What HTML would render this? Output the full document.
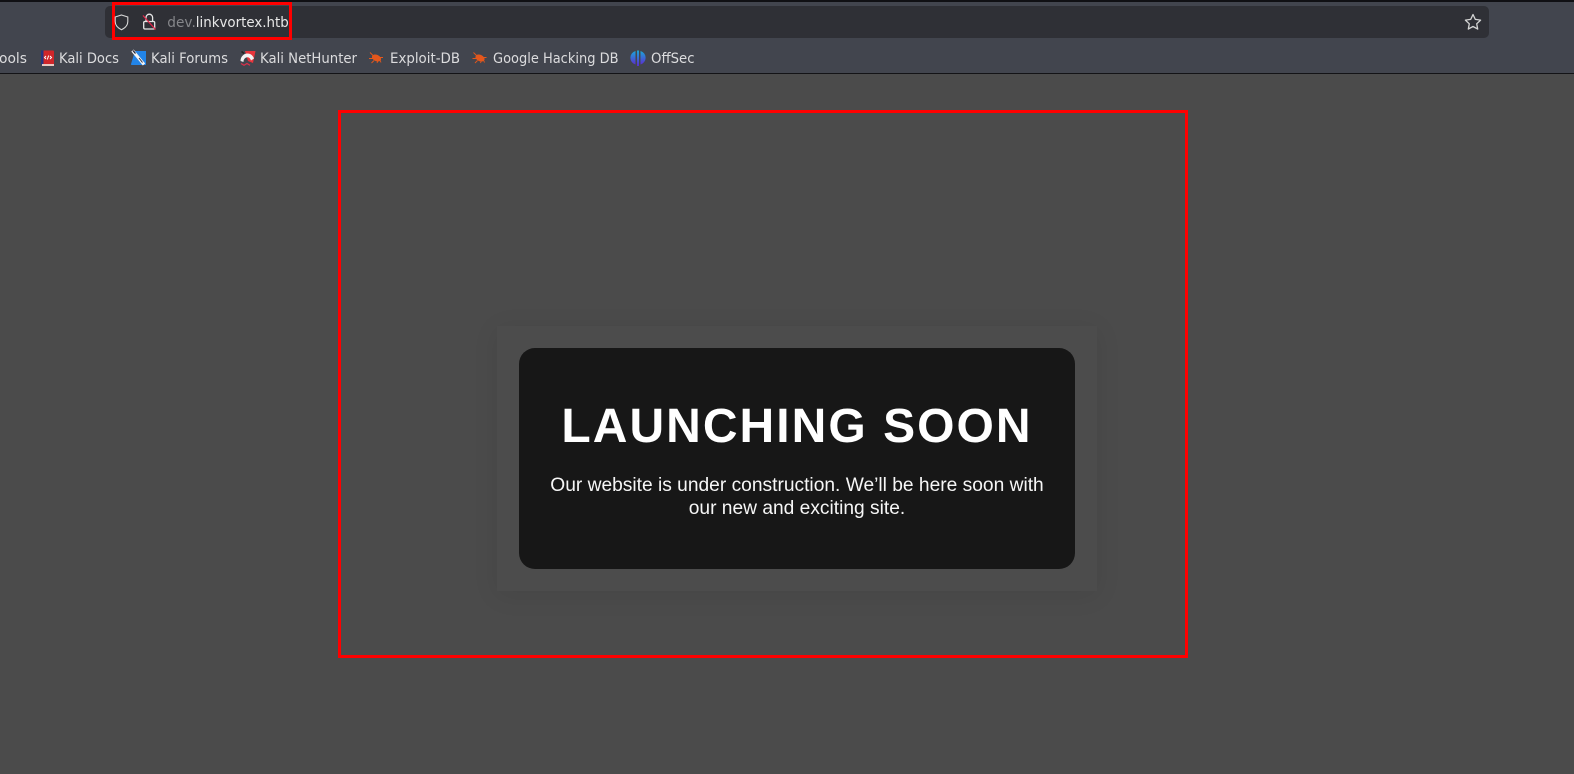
<!DOCTYPE html>
<html><head><meta charset="utf-8"><style>
html,body{margin:0;padding:0;width:1574px;height:774px;overflow:hidden;background:#4b4b4b}
body{position:relative;font-family:"Liberation Sans",sans-serif}
#top{position:absolute;left:0;top:0}
.card{position:absolute;left:497px;top:326px;width:600px;height:265px;background:#4c4c4c;box-shadow:0 4px 24px rgba(0,0,0,.08)}
.inner{position:absolute;left:519px;top:348px;width:556px;height:221px;background:#171717;border-radius:16px;color:#fff;text-align:center}
h1{position:absolute;left:0;width:100%;top:50px;margin:0;font-size:48px;line-height:58px;font-weight:700;letter-spacing:2.04px;white-space:nowrap}
p{position:absolute;left:0;width:100%;top:126px;margin:0;font-size:19.2px;line-height:23px;color:#f6f6f6}
.red{position:absolute;left:338px;top:110px;width:844px;height:542px;border:3px solid #f00}
</style></head><body>
<svg id="top" width="1574" height="74" viewBox="0 0 1574 74" font-family="'DejaVu Sans',sans-serif">
<rect width="1574" height="74" fill="#42454e"/>
<rect width="1574" height="2" fill="#101014"/>
<rect y="73" width="1574" height="1" fill="#131316"/>
<rect x="105" y="6" width="1384" height="32" rx="5" fill="#2f3036"/>
<rect x="113.500" y="3.500" width="177" height="35" fill="none" stroke="#f00" stroke-width="3"/>
<path d="M121.500 15l6.300 2v4.500c0 4-2.300 6.300-6.300 8.300c-4-2-6.300-4.300-6.300-8.300v-4.500z" fill="none" stroke="#d8d8d8" stroke-width="1.100"/>
<path d="M146 21.500v-4a3.300 3.300 0 0 1 6.600 0v4" fill="none" stroke="#e6e6e6" stroke-width="1.300"/>
<rect x="143.700" y="21.500" width="11" height="7.500" rx="1.200" fill="none" stroke="#e6e6e6" stroke-width="1.300"/>
<path d="M143 15.500L155.500 29.500" stroke="#e2254a" stroke-width="1.300"/>
<text x="167.300" y="27" font-size="14" fill="#85868a" textLength="28.500" lengthAdjust="spacingAndGlyphs">dev.</text>
<text x="195.800" y="27" font-size="14" fill="#e8e8e8" textLength="93" lengthAdjust="spacingAndGlyphs">linkvortex.htb</text>
<path d="M1473 14.500l2.300 4.900 5.300.7-3.900 3.700 1 5.300-4.700-2.600-4.700 2.600 1-5.300-3.900-3.700 5.300-.7z" fill="none" stroke="#d4d4d4" stroke-width="1.300" stroke-linejoin="round"/>
<g font-size="14" fill="#dcdcde">
<text x="-1" y="63" textLength="28" lengthAdjust="spacingAndGlyphs">ools</text>
<text x="59" y="63" textLength="60" lengthAdjust="spacingAndGlyphs">Kali Docs</text>
<text x="151" y="63" textLength="77" lengthAdjust="spacingAndGlyphs">Kali Forums</text>
<text x="260" y="63" textLength="97" lengthAdjust="spacingAndGlyphs">Kali NetHunter</text>
<text x="390" y="63" textLength="70" lengthAdjust="spacingAndGlyphs">Exploit-DB</text>
<text x="493" y="63" textLength="125.500" lengthAdjust="spacingAndGlyphs">Google Hacking DB</text>
<text x="651" y="63" textLength="43.500" lengthAdjust="spacingAndGlyphs">OffSec</text>
</g>
<!-- Kali Docs -->
<rect x="41" y="50.500" width="13" height="14" rx="1" fill="#d0262a"/>
<rect x="41" y="50.500" width="2.500" height="14" fill="#27357f"/>
<rect x="42" y="64" width="12" height="2" fill="#e8c9c2"/>
<path d="M46 56l-1.500 1.500L46 59M50 56l1.500 1.500L50 59M48.700 55.500l-1.400 4" fill="none" stroke="#fff" stroke-width="1"/>
<!-- Forums -->
<path d="M135 51h11v14h-14.500a1 1 0 0 1-.5-1z" fill="#2284e8"/>
<path d="M132.500 50.500l11.500 14" stroke="#f4f4f4" stroke-width="3"/>
<path d="M133 50.500l2.500 3" stroke="#223" stroke-width="1.300"/>
<path d="M139 58l3.500 4.500" stroke="#334" stroke-width="1"/>
<!-- NetHunter -->
<path d="M245 51l10.500 0-2.500 12-5-2z" fill="#e8343c"/>
<path d="M240.500 61c0-4.500 3.500-7.500 7-7.500c3 0 5.500 2 6.500 5l-3 2c-.7-2-2-3.200-3.600-3.200c-2 0-3.900 1.800-3.900 4.700z" fill="#f2f2f2"/>
<path d="M241 63.500l3 1.800 3-1.800 3 1.800" fill="none" stroke="#d8304a" stroke-width="1.300"/>
<path d="M241.500 51.500l2.500 2" stroke="#222" stroke-width="1.500"/>
<!-- Exploit bugs -->
<g fill="#e4571c" stroke="#e4571c" stroke-width=".9"><ellipse cx="376.500" cy="58" rx="4.800" ry="3.200" transform="rotate(25 376.500 58)" stroke="none"/><path d="M370 52.500l3.500 3.500M369 58.500h4M371.500 63l2.500-2.500M377 63l1-2.500M381 62.500l-1-2.500M383 57.500l-3 0" fill="none"/></g>
<g transform="translate(103.500 0)" fill="#e4571c" stroke="#e4571c" stroke-width=".9"><ellipse cx="376.500" cy="58" rx="4.800" ry="3.200" transform="rotate(25 376.500 58)" stroke="none"/><path d="M370 52.500l3.500 3.500M369 58.500h4M371.500 63l2.500-2.500M377 63l1-2.500M381 62.500l-1-2.500M383 57.500l-3 0" fill="none"/></g>
<!-- OffSec -->
<defs><linearGradient id="o" x1="0" y1="0" x2="0" y2="1"><stop offset="0" stop-color="#1aa6d8"/><stop offset="1" stop-color="#5a2fd0"/></linearGradient></defs>
<path d="M635.500 51a7 7 0 0 0 0 13.500zM640.500 51a7 7 0 0 1 0 13.500z" fill="url(#o)"/>
<rect x="637" y="50.500" width="2" height="15.500" fill="url(#o)"/>
</svg>
<div class="card"></div>
<div class="inner">
<h1>LAUNCHING SOON</h1>
<p>Our website is under construction. We’ll be here soon with<br>our new and exciting site.</p>
</div>
<div class="red"></div>
</body></html>
